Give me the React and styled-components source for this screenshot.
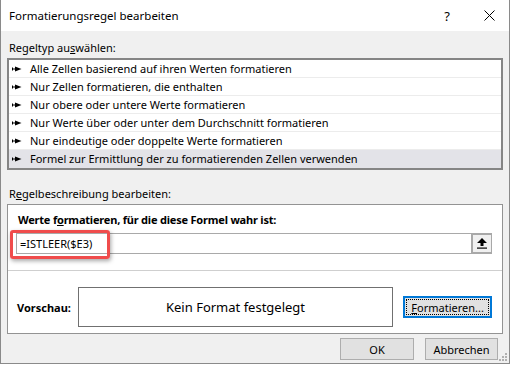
import React from "react";
import styled, { createGlobalStyle } from "styled-components";

const Global = createGlobalStyle`
  body {
    margin: 0;
    background: #ffffff;
    font-family: "Noto Sans", "Open Sans", sans-serif;
    font-size: 11px;
    color: #000;
  }
`;

const Window = styled.div`
  width: 510px;
  height: 364px;
  box-sizing: border-box;
  border: 1px solid #8a8a8a;
  border-top: none;
  background: #f0f0f0;
  display: flex;
  flex-direction: column;
  position: relative;
`;

const TitleBar = styled.div`
  height: 31px;
  background: #fff;
  display: flex;
  align-items: center;
  padding-left: 8px;
`;

const Title = styled.div`
  flex: 1;
  font-size: 11.5px;
`;

const TitleBtn = styled.div`
  width: ${(p) => p.$w}px;
  height: 31px;
  display: flex;
  align-items: center;
  justify-content: center;
  font-size: 13px;
`;

const Body = styled.div`
  flex: 1;
  padding: 9px 6px 0 6px;
  display: flex;
  flex-direction: column;
`;

const Label = styled.div`
  height: 16px;
  line-height: 16px;
  padding-left: 2px;
  margin-bottom: ${(p) => p.$mb || 2}px;
`;

const ListBox = styled.div`
  border: 2px solid #858585;
  background: #fff;
  padding: 0;
  margin-bottom: 16px;
`;

const Row = styled.div`
  height: 18px;
  box-sizing: border-box;
  display: flex;
  align-items: center;
  gap: 8px;
  padding-left: 3px;
  background: ${(p) => (p.$selected ? "#e3e3e8" : "#fff")};
  border-bottom: 1px solid ${(p) => (p.$last ? "transparent" : "#ececec")};
`;

const Panel = styled.div`
  border: 1px solid #939393;
  background: #fff;
  display: flex;
  flex-direction: column;
`;

const Section = styled.div`
  padding: 7px 10px 16px 8px;
  position: relative;
`;

const Bold = styled.div`
  font-weight: bold;
  letter-spacing: -0.2px;
  height: 16px;
  line-height: 16px;
  margin: 0 0 5px 2px;
`;

const InputRow = styled.div`
  display: flex;
  height: 21px;
  box-sizing: border-box;
  border: 1px solid #a9a9a9;
`;

const Input = styled.div`
  flex: 1;
  padding-left: 3px;
  line-height: 19px;
`;

const PickBtn = styled.div`
  width: 21px;
  box-sizing: border-box;
  border: 2px solid #a8a8a8;
  border-right-width: 1px;
  background: #f0f0f0;
  display: flex;
  align-items: center;
  justify-content: center;
  margin: -1px -1px -1px 0;
  height: 21px;
`;

const Highlight = styled.div`
  position: absolute;
  left: 2px;
  top: 25px;
  width: 100px;
  height: 29px;
  box-sizing: border-box;
  border: 3px solid #f04c4c;
  border-radius: 3px;
  box-shadow: 1px 2px 4px rgba(0, 0, 0, 0.35);
`;

const Divider = styled.div`
  height: 1px;
  background: #cfcfcf;
`;

const PreviewRow = styled.div`
  display: flex;
  align-items: center;
  padding: 16px 10px 6px 9px;
`;

const PreviewLabel = styled.div`
  font-weight: bold;
  width: 61px;
`;

const PreviewBox = styled.div`
  width: 316px;
  height: 40px;
  box-sizing: border-box;
  border: 1px solid #707070;
  display: flex;
  align-items: center;
  justify-content: center;
  font-size: 13px;
  margin-right: 10px;
`;

const Button = styled.button`
  width: ${(p) => p.$w || 74}px;
  height: 22px;
  box-sizing: border-box;
  background: #e1e1e1;
  border: ${(p) => (p.$focus ? "2px solid #0078d7" : "1px solid #adadad")};
  outline: ${(p) => (p.$focus ? "1px dotted #000" : "none")};
  outline-offset: -4px;
  font-family: inherit;
  font-size: 11px;
  color: #000;
  padding: 0;
`;

const Footer = styled.div`
  display: flex;
  justify-content: flex-end;
  gap: 11px;
  padding: 4px 5px 0 0;
`;

const Grip = styled.svg`
  position: absolute;
  right: 1px;
  bottom: 1px;
`;

function Bullet() {
  return (
    <svg width="10" height="6" viewBox="0 0 10 6">
      <rect x="0" y="1.5" width="1" height="3" fill="#000" />
      <rect x="0" y="2.5" width="4" height="1" fill="#000" />
      <polygon points="3,0.5 9.5,3 3,5.5" fill="#000" />
    </svg>
  );
}

const rules = [
  "Alle Zellen basierend auf ihren Werten formatieren",
  "Nur Zellen formatieren, die enthalten",
  "Nur obere oder untere Werte formatieren",
  "Nur Werte über oder unter dem Durchschnitt formatieren",
  "Nur eindeutige oder doppelte Werte formatieren",
  "Formel zur Ermittlung der zu formatierenden Zellen verwenden",
];

export default function App() {
  return (
    <>
      <Global />
      <Window>
        <TitleBar>
          <Title>Formatierungsregel bearbeiten</Title>
          <TitleBtn $w={44}>?</TitleBtn>
          <TitleBtn $w={40}>
            <svg width="11" height="11" viewBox="0 0 11 11">
              <path d="M0.5 0.5 L10.5 10.5 M10.5 0.5 L0.5 10.5" stroke="#000" strokeWidth="1" />
            </svg>
          </TitleBtn>
        </TitleBar>
        <Body>
          <Label>
            Regeltyp au<u>s</u>wählen:
          </Label>
          <ListBox>
            {rules.map((r, i) => (
              <Row key={i} $selected={i === rules.length - 1} $last={i === rules.length - 1}>
                <Bullet />
                {r}
              </Row>
            ))}
          </ListBox>
          <Label $mb={0}>
            R<u>e</u>gelbeschreibung bearbeiten:
          </Label>
          <Panel>
            <Section>
              <Bold>
                Werte f<u>o</u>rmatieren, für die diese Formel wahr ist:
              </Bold>
              <InputRow>
                <Input>=ISTLEER($E3)</Input>
                <PickBtn>
                  <svg width="10" height="11" viewBox="0 0 10 11">
                    <polygon points="5,0 10,5 6.5,5 6.5,8 3.5,8 3.5,5 0,5" fill="#000" />
                    <rect x="0" y="9.5" width="10" height="1.2" fill="#000" />
                  </svg>
                </PickBtn>
              </InputRow>
              <Highlight />
            </Section>
            <Divider />
            <PreviewRow>
              <PreviewLabel>Vorschau:</PreviewLabel>
              <PreviewBox>Kein Format festgelegt</PreviewBox>
              <Button $w={89} $focus>
                <u>F</u>ormatieren...
              </Button>
            </PreviewRow>
          </Panel>
          <Footer>
            <Button>OK</Button>
            <Button $w={73}>Abbrechen</Button>
          </Footer>
        </Body>
        <Grip width="10" height="10" viewBox="0 0 10 10">
          {[
            [7, 1],
            [7, 4],
            [4, 4],
            [7, 7],
            [4, 7],
            [1, 7],
          ].map(([x, y], i) => (
            <rect key={i} x={x} y={y} width="2" height="2" fill="#b0b0b0" />
          ))}
        </Grip>
      </Window>
    </>
  );
}
